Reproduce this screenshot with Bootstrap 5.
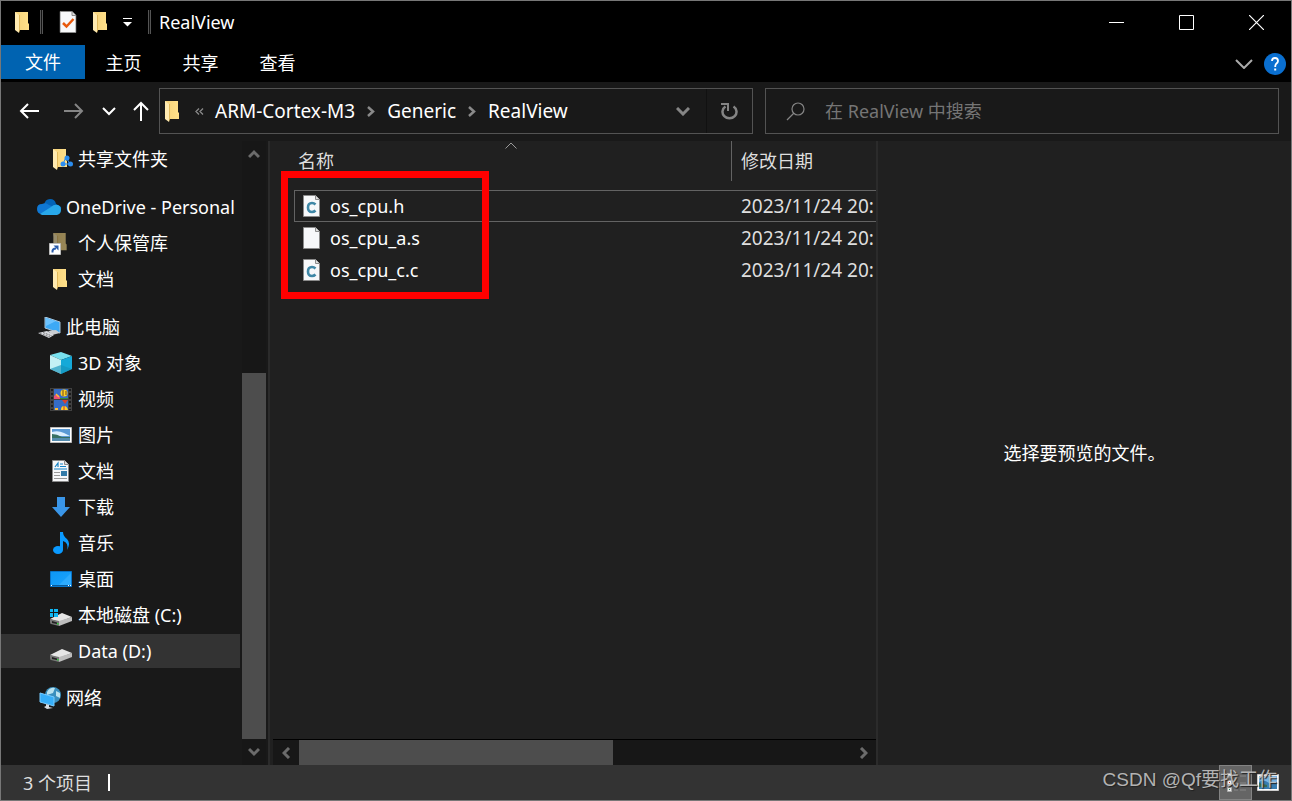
<!DOCTYPE html>
<html lang="zh-CN" data-bs-theme="dark">
<head>
<meta charset="utf-8">
<meta name="viewport" content="width=device-width, initial-scale=1">
<title>RealView</title>
<link href="https://cdn.jsdelivr.net/npm/bootstrap@5.3.0/dist/css/bootstrap.min.css" rel="stylesheet">
<style>
  body { font-family: "Noto Sans", "Noto Sans CJK SC", sans-serif; font-size: 18px; line-height: 24px; color: #fff; background: #1a1a1a; }
  svg { display: block; flex: none; }
  button { color: inherit; background: none; border: 0; padding: 0; }
  a { color: inherit; text-decoration: none; }
  .explorer { border: 1px solid #777; }
  .titlebar { height: 44px; padding-bottom: 2px; padding-left: 14px; background: #000; }
  .quick-start { gap: 11px; }
  .bar-sep { width: 3px; height: 24px; background: #111; border: 1px solid #555; border-width: 0 1px; }
  .win-btn { width: 70px; height: 44px; }
  .ribbon { height: 37px; background: #000; }
  .tab-btn { width: 77px; height: 36px; }
  .tab-file { width: 84px; height: 34px; background: #0063b1; }
  .ribbon-tools { gap: 11px; padding-right: 5px; }
  .address-row { height: 59px; padding-bottom: 1px; background: #191919; }
  .nav-set { width: 158px; padding-left: 18px; padding-right: 10px; }
  .path-and-search { display: grid; grid-template-columns: 594fr 514fr; gap: 12px; padding-right: 12px; }
  .box { height: 46px; border: 1px solid #535353; min-width: 0; }
  .box-path { padding-left: 5px; }
  .box-search { padding-left: 20px; gap: 20px; }
  .crumbs { font-size: 19px; gap: 12px; margin-left: 11px; }
  .refresh { width: 46px; border-left: 1px solid #111; }
  .search-input { background: none; border: 0; outline: 0; color: #fff; min-width: 0; }
  .search-input::placeholder { color: #757575; opacity: 1; }
  .panes { display: grid; grid-template-columns: 269px 608fr 413fr; min-height: 0; }
  .side { background: #191919; border-right: 2px solid #2b2b2b; }
  .tree-row { height: 36px; margin-right: 2px; white-space: nowrap; }
  .tree-top { padding-left: 36px; gap: 5px; }
  .tree-sub { padding-left: 48px; gap: 5px; }
  .tree-row.chosen { background: #333; height: 34px; margin-top: 1px; margin-bottom: 1px; }
  .group-gap { margin-top: 12px; }
  .icon-cell { width: 24px; }
  .track { background: #171717; }
  .v-track { width: 24px; margin-right: 2px; }
  .scroll-btn { width: 100%; height: 26px; }
  .thumb { background: #4d4d4d; }
  .files { background: #202020; border-right: 2px solid #2b2b2b; min-width: 0; }
  .file-table { table-layout: fixed; width: calc(100% - 24px); margin-left: 24px; border-collapse: separate; border-spacing: 0; }
  .name-col { width: 437px; }
  .file-table th { font-weight: 400; height: 49px; padding: 0; vertical-align: top; color: #dedede; }
  .head-cell { height: 40px; padding-left: 4px; }
  .head-date { border-left: 1px solid #636363; padding-left: 9px; }
  .file-table td { height: 32px; padding: 0; border: solid transparent; border-width: 1px 0; color: #dedede; white-space: nowrap; }
  .file-table td:first-child { border-left-width: 1px; color: #fff; }
  .file-table td + td { padding-left: 10px; font-size: 19px; }
  .file-table .focused td { border-color: #636363; }
  .file-name { gap: 10px; }
  .sort-mark { top: 1px; left: 235px; }
  .callout-frame { left: 11px; top: 30px; width: 208px; height: 128px; border: 7px solid #f00; pointer-events: none; }
  .h-track { height: 26px; margin-left: 3px; border-top: 1px solid #000; }
  .h-track .scroll-btn { width: 26px; }
  .preview { background: #202020; }
  .status { height: 35px; background: #333; color: #dedede; }
  .status-count { margin-left: 22px; }
  .caret { width: 2px; height: 17px; background: #fff; }
  .status-views { gap: 5px; padding-right: 12px; }
  .view-btn { width: 33px; height: 35px; background: #656565; border: 1px solid #838383; }
  .watermark { right: 14px; top: 3px; font-family: "Liberation Sans", "Noto Sans CJK SC", sans-serif; font-size: 19px; color: rgba(205,205,205,.85); text-shadow: 1px 1px 1px #222; white-space: nowrap; }
</style>
</head>
<body>
<svg width="0" height="0" class="position-absolute" aria-hidden="true">
  <defs>
    <linearGradient id="gold" x1="0" x2="1"><stop offset="0" stop-color="#f6d37a"/><stop offset="1" stop-color="#ffe08a"/></linearGradient>
    <linearGradient id="deskfill" x1="0" x2="1" y2="1"><stop offset="0" stop-color="#0d96f5"/><stop offset="1" stop-color="#1ba5ff"/></linearGradient>
    <symbol id="folder" viewBox="0 0 14 21"><path d="M0 0H13V11L14 12V18H3z" fill="url(#gold)"/><path d="M0 0L4 3V21L0 18z" fill="#ffeab0"/><path d="M4 3V21L5 18V3z" fill="#e2b95a"/></symbol>
    <symbol id="page" viewBox="0 0 17 22"><path d="M.5.5H12.500L16.500 4.500V21.500H.5z" fill="#f7f8fa" stroke="#8b8b8b"/><path d="M12.500.5V4.500H16.500" fill="#ddd" stroke="#8b8b8b"/></symbol>
    <symbol id="cpage" viewBox="0 0 17 22"><use href="#page"/><path d="M12.500 9.500Q11 8 9 8Q5 8 5 12.500T9 17Q11 17 12.500 15.500" fill="none" stroke="#3f87a6" stroke-width="2.600"/></symbol>
    <symbol id="drive" viewBox="0 0 22 13"><path d="M0 6L12 0L22 4L9 9z" fill="#e6e6e6"/><path d="M0 6L9 8V13L1 11Q0 11 0 9z" fill="#777"/><path d="M9 8L22 4V8L9 13z" fill="#bdbdbd"/><path d="M2 8L7 9.500V11L2 10z" fill="#222"/><path d="M7 10h1.500v1.500H7z" fill="#2fd33c"/></symbol>
  </defs>
</svg>

<div class="explorer d-flex flex-column vh-100">
  <header class="titlebar d-flex align-items-center flex-shrink-0">
    <div class="quick-start d-flex align-items-center me-3">
      <svg width="14" height="21"><use href="#folder"/></svg>
      <span class="bar-sep"></span>
    </div>
    <button type="button" aria-label="属性"><svg width="18" height="22" viewBox="0 0 17 22"><use href="#page"/><path d="M3.500 12L7 15.500L14 8" fill="none" stroke="#e8590c" stroke-width="2.500"/></svg></button>
    <button type="button" class="ms-3" aria-label="新建文件夹"><svg width="14" height="21"><use href="#folder"/></svg></button>
    <button type="button" class="ms-3" aria-label="自定义快速访问工具栏"><svg width="9" height="9" viewBox="0 0 9 9"><path d="M0 .5H9" stroke="#fff"/><path d="M0 4H9L4.500 8.500z" fill="#fff"/></svg></button>
    <span class="bar-sep ms-3"></span>
    <span class="ms-1 ps-1">RealView</span>
    <div class="ms-auto d-flex">
      <button type="button" class="win-btn d-flex align-items-center justify-content-center" aria-label="最小化"><svg width="15" height="15"><path d="M0 7.500H15" stroke="#fff"/></svg></button>
      <button type="button" class="win-btn d-flex align-items-center justify-content-center" aria-label="最大化"><svg width="15" height="15"><path d="M.5.5H14.500V14.500H.5z" fill="none" stroke="#fff"/></svg></button>
      <button type="button" class="win-btn d-flex align-items-center justify-content-center" aria-label="关闭"><svg width="15" height="15"><path d="M0 0L15 15M15 0L0 15" stroke="#fff" stroke-width="1.200"/></svg></button>
    </div>
  </header>

  <nav class="ribbon d-flex flex-shrink-0">
    <button type="button" class="tab-btn tab-file">文件</button>
    <button type="button" class="tab-btn">主页</button>
    <button type="button" class="tab-btn">共享</button>
    <button type="button" class="tab-btn">查看</button>
    <div class="ribbon-tools ms-auto d-flex align-items-center">
      <button type="button" aria-label="展开功能区"><svg width="18" height="10"><path d="M1 1L9 9L17 1" fill="none" stroke="#aaa" stroke-width="2"/></svg></button>
      <button type="button" aria-label="帮助"><svg width="22" height="22"><circle cx="11" cy="11" r="11" fill="#0a6fd0"/><path d="M8 8Q8 5 11 5T14 8Q14 9.500 12 11Q11.200 12 11.200 14" fill="none" stroke="#fff" stroke-width="1.800"/><path d="M10.200 15.500h2v2h-2z" fill="#fff"/></svg></button>
    </div>
  </nav>

  <div class="address-row d-flex align-items-center flex-shrink-0">
    <div class="nav-set d-flex align-items-center justify-content-between">
      <button type="button" aria-label="后退"><svg width="20" height="16"><path d="M20 8H2M9 1L2 8L9 15" fill="none" stroke="#fff" stroke-width="2"/></svg></button>
      <button type="button" class="ms-2" aria-label="前进"><svg width="20" height="16"><path d="M0 8H18M11 1L18 8L11 15" fill="none" stroke="#858585" stroke-width="2"/></svg></button>
      <button type="button" aria-label="最近浏览的位置"><svg width="14" height="9"><path d="M1 1L7 7L13 1" fill="none" stroke="#fff" stroke-width="2"/></svg></button>
      <button type="button" aria-label="上移"><svg width="16" height="20"><path d="M8 20V2M1 9L8 2L15 9" fill="none" stroke="#fff" stroke-width="2"/></svg></button>
    </div>
    <div class="path-and-search flex-grow-1">
      <div class="box box-path d-flex align-items-center">
        <svg width="14" height="21"><use href="#folder"/></svg>
        <svg width="9" height="7" class="ms-3"><path d="M4 .5L1 3.500L4 6.500M8 .5L5 3.500L8 6.500" fill="none" stroke="#8a8a8a" stroke-width="1.300"/></svg>
        <div class="crumbs d-flex align-items-center">
          <a href="#">ARM-Cortex-M3</a>
          <svg width="8" height="11"><path d="M1 1L6 5.500L1 10" fill="none" stroke="#8a8a8a" stroke-width="2.500"/></svg>
          <a href="#">Generic</a>
          <svg width="8" height="11"><path d="M1 1L6 5.500L1 10" fill="none" stroke="#8a8a8a" stroke-width="2.500"/></svg>
          <a href="#">RealView</a>
        </div>
        <button type="button" class="ms-auto me-3" aria-label="以前的位置"><svg width="14" height="9"><path d="M1 1L7 7L13 1" fill="none" stroke="#858585" stroke-width="3"/></svg></button>
        <button type="button" class="refresh align-self-stretch d-flex align-items-center justify-content-center" aria-label="刷新"><svg width="17" height="17"><path d="M12.500 3.500A7 6.500 0 1 1 4.500 3.500" fill="none" stroke="#858585" stroke-width="2.500"/><path d="M0 1H7V8" fill="none" stroke="#858585" stroke-width="2"/></svg></button>
      </div>
      <label class="box box-search d-flex align-items-center">
        <svg width="19" height="19"><circle cx="12" cy="7" r="6" fill="none" stroke="#858585" stroke-width="1.200"/><path d="M8 11L1 18" stroke="#858585" stroke-width="1.200"/></svg>
        <input type="search" class="search-input flex-grow-1 p-0" placeholder="在 RealView 中搜索" aria-label="搜索">
      </label>
    </div>
  </div>

  <main class="panes flex-grow-1">
    <aside class="side d-flex">
      <nav class="flex-grow-1">
        <a href="#" class="tree-row tree-sub d-flex align-items-center"><span class="icon-cell"><svg width="24" height="22" viewBox="0 0 24 22"><use href="#folder" x="4" y="1" width="14" height="21"/><path d="M17 9L14 16M17 9L21 16M14 16H21" stroke="#2b8df0"/><circle cx="18" cy="10" r="2.500" fill="#2b8df0"/><circle cx="14" cy="16" r="2.500" fill="#2b8df0"/><circle cx="21.500" cy="16" r="2.500" fill="#2b8df0"/></svg></span><span>共享文件夹</span></a>
        <a href="#" class="tree-row tree-top group-gap d-flex align-items-center"><span class="icon-cell"><svg width="25" height="16"><path d="M7 6Q8 0 13 0T19 5L24 8Q25 12 20 12H4z" fill="#0364b8"/><path d="M5 15Q0 15 0 10T5 5Q9 3 12 6L20 9L8 15z" fill="#0f78d4"/><path d="M3 15L14 8Q17 5 21 6Q24 7 24 11T20 16H5z" fill="#28a8ea"/></svg></span><span>OneDrive - Personal</span></a>
        <a href="#" class="tree-row tree-sub d-flex align-items-center"><span class="icon-cell"><svg width="24" height="23"><g opacity=".55"><use href="#folder" x="4" y="1" width="14" height="20"/></g><path d="M.5 11.500h11v11H.5z" fill="#fff" stroke="#bbb"/><path d="M3.500 20.500Q3 16.500 7 16.500" fill="none" stroke="#2a5caa" stroke-width="2"/><path d="M4.500 13.500H9.500V18.500z" fill="#2a5caa"/></svg></span><span>个人保管库</span></a>
        <a href="#" class="tree-row tree-sub d-flex align-items-center"><span class="icon-cell"><svg width="24" height="21"><use href="#folder" x="4" y="0" width="14" height="21"/></svg></span><span>文档</span></a>
        <a href="#" class="tree-row tree-top group-gap d-flex align-items-center"><span class="icon-cell"><svg width="25" height="21"><path d="M8 0L23 5V16L8 11z" fill="#3ca9f5" stroke="#a8c4d8"/><path d="M9 1L19 4L9 9z" fill="#6cc3ff"/><path d="M11 14L19 13L23 16L15 18z" fill="#c9ccd0"/><path d="M1 16L10 14L17 18L12 21z" fill="#d9dbe0"/><path d="M3 16.500L13 20M6 15.500L15 19" stroke="#777" stroke-dasharray="2 1"/></svg></span><span>此电脑</span></a>
        <a href="#" class="tree-row tree-sub d-flex align-items-center"><span class="icon-cell"><svg width="24" height="22"><path d="M1 3L12 0L23 4L12 8z" fill="#78e0ee"/><path d="M1 3L12 8V22L1 17z" fill="#c4f0f4"/><path d="M12 8L23 4V17L12 22z" fill="#15a9d8"/><path d="M1 17L12 13L23 17L12 22z" fill="#1593bb" opacity=".65"/></svg></span><span>3D 对象</span></a>
        <a href="#" class="tree-row tree-sub d-flex align-items-center"><span class="icon-cell"><svg width="24" height="23"><path d="M1 0h22v23H1z" fill="#414141"/><path d="M5 1h14v10H5zM5 12h14v10H5z" fill="#356cc5"/><path d="M3 1v21M21 1v21" stroke="#111" stroke-width="1.500" stroke-dasharray="2 2"/><circle cx="15" cy="5" r="3.500" fill="#ffd027"/><path d="M14 2v6M17 3v4" stroke="#6b4a1a"/><path d="M5 8Q8 5 11 9V11H5z" fill="#e8507a"/><path d="M7 6l3 3" stroke="#fb3" stroke-width="1.500"/><path d="M11 10h8v1h-8z" fill="#2e8b3d"/><path d="M13 12h6l-3 4z" fill="#d8432e"/><path d="M12 22Q12 18 15 18T19 22z" fill="#ffd027"/><path d="M15 18v4" stroke="#c33"/><path d="M6 20h3v2H6z" fill="#fb3"/></svg></span><span>视频</span></a>
        <a href="#" class="tree-row tree-sub d-flex align-items-center"><span class="icon-cell"><svg width="24" height="16"><path d="M1.500.5h21v15h-21z" fill="#fff" stroke="#bbb"/><path d="M3 2h18v12H3z" fill="#5a9ad6"/><path d="M3 5Q9 3 15 6L21 9H3z" fill="#dcefff"/><path d="M3 7Q8 7 13 10L21 10V12H3z" fill="#387164"/><path d="M3 11h18v3H3z" fill="#548cae"/></svg></span><span>图片</span></a>
        <a href="#" class="tree-row tree-sub d-flex align-items-center"><span class="icon-cell"><svg width="24" height="22"><use href="#page" x="3" y="0" width="17" height="22"/><path d="M6 7L9 3V7M11 4h3M11 6.500h6M5 9h13" fill="none" stroke="#1684c7" stroke-width="1.200"/><path d="M5 12.500h6M5 15.500h6M5 18.500h13" stroke="#999"/><path d="M12 11h6v5h-6z" fill="#347ba9"/></svg></span><span>文档</span></a>
        <a href="#" class="tree-row tree-sub d-flex align-items-center"><span class="icon-cell"><svg width="24" height="20"><path d="M8 0h8v10h5l-9 10L3 10h5z" fill="#3a96e8"/></svg></span><span>下载</span></a>
        <a href="#" class="tree-row tree-sub d-flex align-items-center"><span class="icon-cell"><svg width="24" height="22"><ellipse cx="9" cy="18" rx="5" ry="4" fill="#0a9aff"/><path d="M11 0h3Q14 4 18 7Q22 11 18 18Q20 11 14 9V18h-3z" fill="#0a9aff"/></svg></span><span>音乐</span></a>
        <a href="#" class="tree-row tree-sub d-flex align-items-center"><span class="icon-cell"><svg width="24" height="16"><path d="M1.500.5h21v15h-21z" fill="url(#deskfill)" stroke="#0874c9"/><path d="M10 14L22 2V14z" fill="#43b6ff" opacity=".5"/><path d="M2 14.500h20" stroke="#075a9b"/><path d="M2 14.500h1M19 14.500h1M21 14.500h1" stroke="#fff"/></svg></span><span>桌面</span></a>
        <a href="#" class="tree-row tree-sub d-flex align-items-center"><span class="icon-cell pt-1"><svg width="24" height="17"><use href="#drive" x="1" y="4" width="22" height="13"/><path d="M1 0h3v3H1zM5 0h4v3H5zM1 4h3v4H1zM5 4h4v4H5z" fill="#10b8f5"/></svg></span><span>本地磁盘 (C:)</span></a>
        <a href="#" class="tree-row tree-sub chosen d-flex align-items-center" aria-current="true"><span class="icon-cell pt-2"><svg width="24" height="13"><use href="#drive" x="1" width="22" height="13"/></svg></span><span>Data (D:)</span></a>
        <a href="#" class="tree-row tree-top group-gap d-flex align-items-center"><span class="icon-cell"><svg width="25" height="22"><circle cx="16" cy="8" r="8" fill="#398fbe"/><path d="M10 5Q13 0 18 1L16 6L10 8zM19 4l4 2v5l-4-2z" fill="#b9e2ef"/><path d="M3 6L17 10V19L3 15z" fill="#36aef8" stroke="#77cbff"/><path d="M9 17l3 1v2l4 1-6 1-3-2 2-1z" fill="#d5dce2"/></svg></span><span>网络</span></a>
      </nav>
      <div class="track v-track d-flex flex-column">
        <button type="button" class="scroll-btn d-flex align-items-center justify-content-center" aria-label="向上滚动"><svg width="12" height="10"><path d="M1 8L6 3L11 8" fill="none" stroke="#6b6b6b" stroke-width="3"/></svg></button>
        <div class="flex-grow-1 d-flex flex-column justify-content-end"><div class="thumb" style="height:64%"></div></div>
        <button type="button" class="scroll-btn d-flex align-items-center justify-content-center" aria-label="向下滚动"><svg width="12" height="10"><path d="M1 2L6 7L11 2" fill="none" stroke="#6b6b6b" stroke-width="3"/></svg></button>
      </div>
    </aside>

    <section class="files position-relative d-flex flex-column">
      <div class="flex-grow-1">
        <table class="file-table">
          <colgroup><col class="name-col"><col></colgroup>
          <thead><tr>
            <th scope="col"><div class="head-cell d-flex align-items-center">名称</div></th>
            <th scope="col"><div class="head-cell head-date d-flex align-items-center">修改日期</div></th>
          </tr></thead>
          <tbody>
            <tr class="focused"><td><div class="file-name d-flex align-items-center ps-2"><svg width="17" height="22"><use href="#cpage"/></svg><span>os_cpu.h</span></div></td><td>2023/11/24 20:</td></tr>
            <tr><td><div class="file-name d-flex align-items-center ps-2"><svg width="17" height="22"><use href="#page"/></svg><span>os_cpu_a.s</span></div></td><td>2023/11/24 20:</td></tr>
            <tr><td><div class="file-name d-flex align-items-center ps-2"><svg width="17" height="22"><use href="#cpage"/></svg><span>os_cpu_c.c</span></div></td><td>2023/11/24 20:</td></tr>
          </tbody>
        </table>
      </div>
      <svg class="sort-mark position-absolute" width="12" height="7"><path d="M.5 6.500L6 1L11.500 6.500" fill="none" stroke="#999"/></svg>
      <div class="callout-frame position-absolute"></div>
      <div class="track h-track d-flex">
        <button type="button" class="scroll-btn d-flex align-items-center justify-content-center" aria-label="向左滚动"><svg width="9" height="12"><path d="M7 1L2 6L7 11" fill="none" stroke="#6b6b6b" stroke-width="3"/></svg></button>
        <div class="flex-grow-1"><div class="thumb h-100" style="width:57%"></div></div>
        <button type="button" class="scroll-btn d-flex align-items-center justify-content-center" aria-label="向右滚动"><svg width="9" height="12"><path d="M2 1L7 6L2 11" fill="none" stroke="#6b6b6b" stroke-width="3"/></svg></button>
      </div>
    </section>

    <section class="preview d-flex align-items-center justify-content-center"><span>选择要预览的文件。</span></section>
  </main>

  <footer class="status position-relative d-flex align-items-center flex-shrink-0">
    <span class="status-count">3 个项目</span>
    <span class="caret ms-3"></span>
    <div class="status-views ms-auto d-flex align-items-center">
      <button type="button" class="view-btn d-flex align-items-center justify-content-center" aria-label="详细信息"><svg width="24" height="20"><path d="M3.500.5h4v4h-4zM3.500 7.500h4v4h-4zM3.500 14.500h4v4h-4z" fill="#eee" stroke="#aaa"/><path d="M5 2h1v1H5z" fill="#28c"/><path d="M5 9h1v1H5z" fill="#c42"/><path d="M5 16h1v1H5z" fill="#285"/><path d="M10 3h4M16 3h6M10 10h4M16 10h6M10 17h4M16 17h6" stroke="#888"/></svg></button>
      <button type="button" aria-label="大缩略图"><svg width="22" height="17"><path d="M.5.5h21v16H.5z" fill="#fff" stroke="#ccc"/><path d="M2 2h18v13H2z" fill="#78b5e8"/><path d="M2 8Q7 5 12 9L20 8V15H2z" fill="#397cb0"/><path d="M2 9l8 2v2H2z" fill="#376d54"/></svg></button>
    </div>
    <span class="watermark position-absolute">CSDN @Qf要找工作</span>
  </footer>
</div>
<script src="https://cdn.jsdelivr.net/npm/bootstrap@5.3.0/dist/js/bootstrap.bundle.min.js"></script>
</body>
</html>
